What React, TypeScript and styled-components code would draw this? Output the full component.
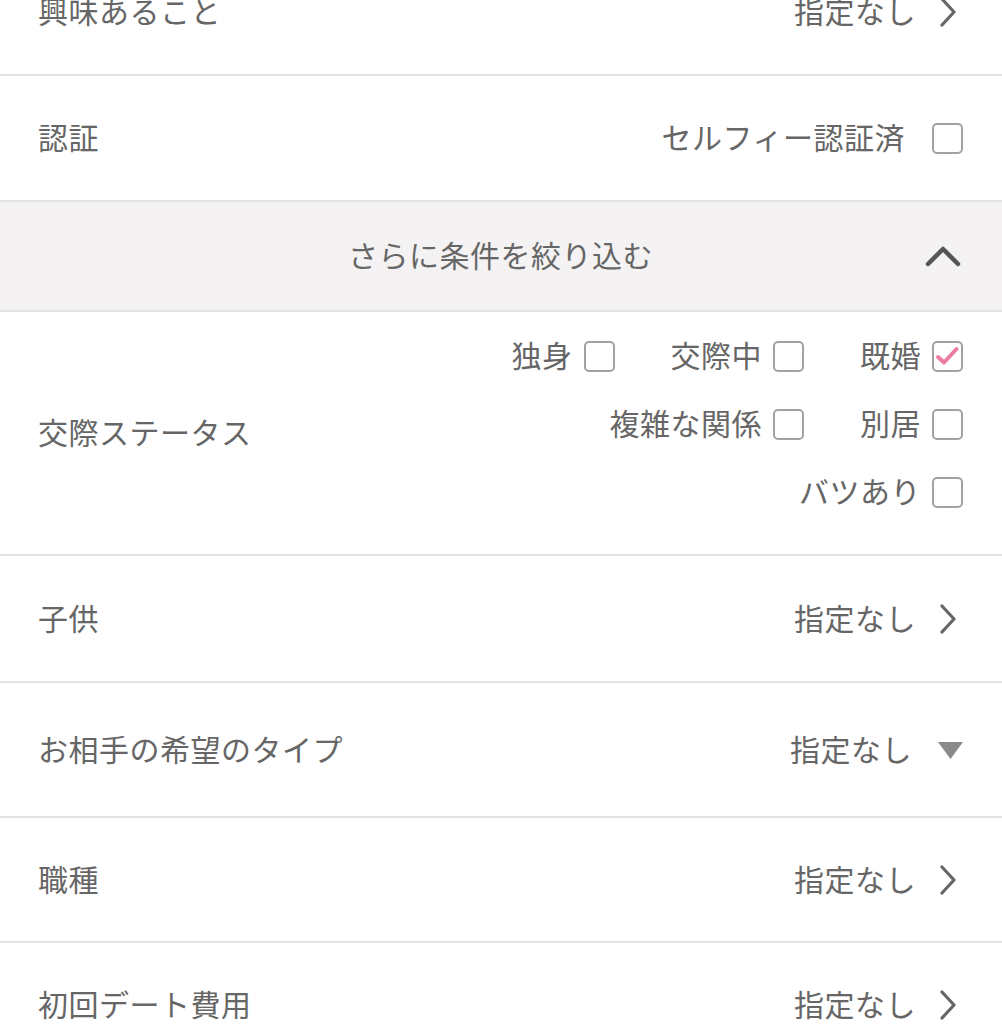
import React from "react";
import styled, { createGlobalStyle } from "styled-components";

const GlobalStyle = createGlobalStyle`
  html, body {
    margin: 0;
    padding: 0;
    background: #fff;
    overflow: hidden;
  }
  body {
    font-family: "Noto Sans CJK JP", "Noto Sans", sans-serif;
    color: #666;
  }
`;

const List = styled.div`
  margin-top: -50px;
  width: 1002px;
`;

const Row = styled.div<{ $h?: number }>`
  display: flex;
  align-items: center;
  justify-content: space-between;
  box-sizing: content-box;
  height: ${(p) => p.$h || 124}px;
  padding: 0 39px 0 38px;
  border-bottom: 2px solid #e3e3e3;
`;

const Label = styled.div`
  font-size: 30px;
  line-height: 1;
  letter-spacing: 0.5px;
  padding-bottom: 4px;
  color: #666;
`;

const Right = styled.div<{ $gap?: number }>`
  display: flex;
  align-items: center;
  gap: ${(p) => p.$gap ?? 24}px;
`;

const Value = styled.span`
  font-size: 30px;
  line-height: 1;
  letter-spacing: 0.5px;
  padding-bottom: 4px;
  color: #666;
`;

const IconSlot = styled.span`
  display: flex;
  align-items: center;
  justify-content: center;
  width: 31px;
`;

const Header = styled.div`
  display: grid;
  grid-template-columns: 1fr auto 1fr;
  align-items: center;
  height: 108px;
  padding: 0 41px 0 40px;
  background: #f4f2f3;
  border-bottom: 2px solid #e3e3e3;
`;

const HeaderTitle = styled.span`
  font-size: 30px;
  line-height: 1;
  letter-spacing: 0.5px;
  padding-bottom: 4px;
  color: #666;
`;

const HeaderIcon = styled.span`
  justify-self: end;
  display: flex;
`;

const StatusRow = styled(Row)`
  height: auto;
  align-items: center;
`;

const CheckGroup = styled.div`
  display: flex;
  flex-direction: column;
  gap: 36px;
  padding: 28px 0 46px;
`;

const CheckLine = styled.div`
  display: flex;
  justify-content: flex-end;
  align-items: center;
  height: 32px;
  gap: 56px;
`;

const CheckItem = styled.label`
  display: flex;
  align-items: center;
  height: 32px;
  gap: 11px;
  font-size: 30px;
  line-height: 1;
  letter-spacing: 0.5px;
  color: #666;
`;

const CheckText = styled.span`
  padding-bottom: 4px;
`;

const Box = styled.span`
  box-sizing: border-box;
  display: flex;
  align-items: center;
  justify-content: center;
  width: 31px;
  height: 31px;
  border: 2px solid #a2a2a2;
  border-radius: 5px;
  background: #fff;
`;

const Checkbox = ({ checked }: { checked?: boolean }) => (
  <Box>
    {checked && (
      <svg width="27" height="27" viewBox="0 0 27 27">
        <path
          d="M4 14 L10 19.5 L22.5 6"
          fill="none"
          stroke="#ec7d9f"
          strokeWidth="4"
          strokeLinecap="round"
          strokeLinejoin="round"
        />
      </svg>
    )}
  </Box>
);

const Chevron = () => (
  <svg width="31" height="30" viewBox="0 0 31 30">
    <path
      d="M10 2 L22 15 L10 28"
      fill="none"
      stroke="#666"
      strokeWidth="3.2"
      strokeLinecap="round"
      strokeLinejoin="round"
    />
  </svg>
);

const Triangle = () => (
  <svg width="31" height="20" viewBox="0 0 31 20">
    <path d="M6 2 L31 2 L18.5 19 Z" fill="#8a8a8a" />
  </svg>
);

const ChevronUp = () => (
  <svg width="36" height="24" viewBox="0 0 36 24">
    <path
      d="M3 20 L18 5 L33 20"
      fill="none"
      stroke="#555"
      strokeWidth="4.5"
      strokeLinecap="round"
      strokeLinejoin="round"
    />
  </svg>
);

const SelectRow = ({ label, value = "指定なし", h }: { label: string; value?: string; h?: number }) => (
  <Row $h={h}>
    <Label>{label}</Label>
    <Right $gap={16}>
      <Value>{value}</Value>
      <IconSlot>
        <Chevron />
      </IconSlot>
    </Right>
  </Row>
);

const statusLines = [
  [
    { label: "独身" },
    { label: "交際中" },
    { label: "既婚", checked: true },
  ],
  [{ label: "複雑な関係" }, { label: "別居" }],
  [{ label: "バツあり" }],
];

export default function App() {
  return (
    <>
      <GlobalStyle />
      <List>
        <SelectRow label="興味あること" />
        <Row>
          <Label>認証</Label>
          <Right $gap={27}>
            <Value>セルフィー認証済</Value>
            <Checkbox />
          </Right>
        </Row>
        <Header>
          <span />
          <HeaderTitle>さらに条件を絞り込む</HeaderTitle>
          <HeaderIcon>
            <ChevronUp />
          </HeaderIcon>
        </Header>
        <StatusRow>
          <Label>交際ステータス</Label>
          <CheckGroup>
            {statusLines.map((line, i) => (
              <CheckLine key={i}>
                {line.map((item) => (
                  <CheckItem key={item.label}>
                    <CheckText>{item.label}</CheckText>
                    <Checkbox checked={item.checked} />
                  </CheckItem>
                ))}
              </CheckLine>
            ))}
          </CheckGroup>
        </StatusRow>
        <SelectRow label="子供" h={125} />
        <Row $h={133}>
          <Label>お相手の希望のタイプ</Label>
          <Right $gap={20}>
            <Value>指定なし</Value>
            <IconSlot>
              <Triangle />
            </IconSlot>
          </Right>
        </Row>
        <SelectRow label="職種" h={123} />
        <SelectRow label="初回デート費用" />
      </List>
    </>
  );
}
